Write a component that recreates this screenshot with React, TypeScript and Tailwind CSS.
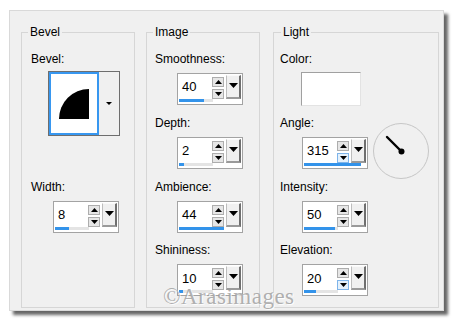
import type { ReactNode } from "react"

type SpinProps = {
  value: string
  bar: number
  hot?: boolean
  className?: string
}

// small solid triangles used by the spin buttons and drop arrows
function Tri({ up, w, h }: { up?: boolean; w: number; h: number }) {
  const d = up ? `M${w / 2} 0 L${w} ${h} L0 ${h} Z` : `M0 0 L${w} 0 L${w / 2} ${h} Z`
  return (
    <svg width={w} height={h} viewBox={`0 0 ${w} ${h}`} className="block">
      <path d={d} fill="#000" />
    </svg>
  )
}

function Spin({ value, bar, hot, className = "" }: SpinProps) {
  const btn = "h-[10px] border border-[#adadad] bg-[#e6e6e6] flex items-center justify-center"
  const btnHot = "h-[10px] border border-[#7eb4ea] bg-[#e5f1fb] flex items-center justify-center"
  return (
    <div
      className={`w-[66px] h-[32px] border border-[#a3a3a3] bg-white flex flex-col px-[1px] pt-[1px] pb-[2px] ${className}`}
    >
      <div className="flex flex-1 min-h-0">
        <span className="flex-1 flex items-center pl-[3px] text-[13px] text-black">{value}</span>
        <div className="w-[12px] flex flex-col gap-[2px] pt-[2px]">
          <div className={btn}>
            <Tri up w={7} h={4} />
          </div>
          <div className={hot ? btnHot : btn}>
            <Tri w={7} h={4} />
          </div>
        </div>
        <div className="ml-[2px] w-[15px] h-full bg-[#f0f0f0] border-t border-l border-t-[#fafafa] border-l-[#bdbdbd] border-r-2 border-b-2 border-r-[#6f6f6f] border-b-[#9a9a9a] flex justify-center pt-[7px]">
          <Tri w={9} h={5} />
        </div>
      </div>
      <div className="h-[3px] flex">
        <div className="bg-[#3393ea]" style={{ width: bar }} />
        <div className="bg-[#e4e4e4]" style={{ width: Math.max(0, 34 - bar) }} />
      </div>
    </div>
  )
}

function Label({ text, className = "" }: { text: string; className?: string }) {
  return <div className={`h-[14px] leading-[14px] text-[12px] text-black ${className}`}>{text}</div>
}

function Group({
  title,
  titleClass,
  widthClass,
  children,
}: {
  title: string
  titleClass: string
  widthClass: string
  children: ReactNode
}) {
  return (
    <div className={`relative h-full border border-[#d6d6d6] flex flex-col pt-[19px] ${widthClass}`}>
      <span
        className={`absolute top-[-8px] px-[2px] bg-[#f0f0f0] h-[14px] leading-[14px] text-[12px] text-black ${titleClass}`}
      >
        {title}
      </span>
      {children}
    </div>
  )
}

function Dial() {
  return (
    <svg width="56" height="56" viewBox="0 0 56 56" className="ml-[5px] mt-[7px] block">
      <circle cx="28" cy="28" r="27.5" fill="none" stroke="#c6c6c6" strokeWidth="1" />
      <line x1="14" y1="14" x2="28" y2="28" stroke="#000" strokeWidth="2.4" strokeLinecap="round" />
      <circle cx="28.5" cy="28.5" r="3" fill="#000" />
    </svg>
  )
}

const imageFields = [
  { label: "Smoothness:", value: "40", bar: 25 },
  { label: "Depth:", value: "2", bar: 5 },
  { label: "Ambience:", value: "44", bar: 45 },
  { label: "Shininess:", value: "10", bar: 4 },
]

export default function App() {
  return (
    <div className="relative w-[455px] h-[322px] bg-white font-['Liberation_Sans',Arial,sans-serif] pt-[10px] pl-[9px]">
      <div className="w-[435px] h-[301px] bg-[#f0f0f0] border border-[#d9d9d9] shadow-[4px_4px_3px_rgba(0,0,0,0.6)] flex pl-[11px] pt-[21px] pb-[2px] pr-[4px]">
        <Group title="Bevel" titleClass="left-[6px]" widthClass="w-[114px]">
          <div className="h-[128px] flex flex-col">
            <Label text="Bevel:" className="pl-[9px]" />
            <div className="ml-[26px] mt-[5px] w-[72px] h-[65px] border border-[#6e6e6e] flex">
              <div className="w-[50px] border-2 border-[#3797f0] bg-white flex items-center justify-center">
                <svg width="30" height="30" viewBox="0 0 30 30" className="block">
                  <path d="M0 30 A30 30 0 0 1 30 0 V30 Z" fill="#000" />
                </svg>
              </div>
              <div className="flex-1 bg-[#f0f0f0] flex items-center justify-center">
                <Tri w={6} h={3} />
              </div>
            </div>
          </div>
          <div className="h-[64px] flex flex-col">
            <Label text="Width:" className="pl-[9px]" />
            <Spin value="8" bar={14} className="ml-[31px] mt-[7px]" />
          </div>
        </Group>

        <div className="w-[11px]" />

        <Group title="Image" titleClass="left-[6px]" widthClass="w-[114px]">
          {imageFields.map((f) => (
            <div key={f.label} className="h-[64px] flex flex-col">
              <Label text={f.label} className="pl-[8px]" />
              <Spin value={f.value} bar={f.bar} className="ml-[30px] mt-[7px]" />
            </div>
          ))}
        </Group>

        <div className="w-[13px]" />

        <Group title="Light" titleClass="left-[7px]" widthClass="w-[166px]">
          <div className="h-[64px] flex flex-col">
            <Label text="Color:" className="pl-[6px]" />
            <div className="ml-[27px] mt-[6px] w-[60px] h-[34px] bg-white border border-t-[#a0a0a0] border-l-[#a0a0a0] border-r-[#e3e3e3] border-b-[#e3e3e3]" />
          </div>
          <div className="h-[64px] flex">
            <div className="flex flex-col">
              <Label text="Angle:" className="pl-[6px]" />
              <Spin value="315" bar={57} hot className="ml-[28px] mt-[7px]" />
            </div>
            <Dial />
          </div>
          <div className="h-[64px] flex flex-col">
            <Label text="Intensity:" className="pl-[6px]" />
            <Spin value="50" bar={31} className="ml-[28px] mt-[7px]" />
          </div>
          <div className="h-[64px] flex flex-col">
            <Label text="Elevation:" className="pl-[6px]" />
            <Spin value="20" bar={12} hot className="ml-[28px] mt-[7px]" />
          </div>
        </Group>
      </div>

      {/* watermark across the bottom of the dialog */}
      <span className="absolute left-[163px] top-[285px] leading-none text-[23px] font-['Liberation_Serif',serif] text-[#9c9c9c]/80 [text-shadow:1px_1px_0_rgba(255,255,255,0.9)] tracking-[0.5px]">
        ©Arasimages
      </span>
    </div>
  )
}
